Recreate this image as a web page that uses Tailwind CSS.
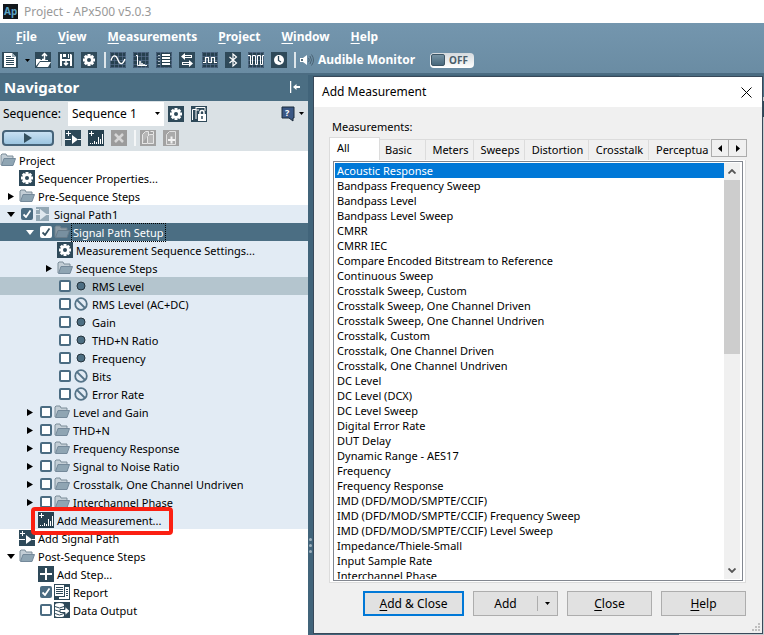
<!doctype html>
<html lang="en">
<head>
  <meta charset="UTF-8">
  <meta name="viewport" content="width=device-width, initial-scale=1.0">
  <title>Project - APx500 v5.0.3</title>
  <script src="https://cdn.jsdelivr.net/npm/@tailwindcss/browser@4"></script>
</head>
<body class="relative flex flex-col h-screen overflow-hidden bg-[#3f6177] font-['Noto_Sans','Open_Sans',sans-serif] text-[11px] text-black">

  <!-- Icon sprite -->
  <svg class="hidden">
    <symbol id="folder" viewBox="0 0 16 16">
      <path d="M1 13V3l1-1h4l1 2h6v2" fill="#c3ced6" stroke="#7c8d99"/>
      <path d="M1.5 13.5 4 6.5h11.5l-2.5 7z" fill="#8fa5b3" stroke="#74899a"/>
    </symbol>
    <symbol id="folder-dark" viewBox="0 0 16 16">
      <path d="M1 13V3l1-1h4l1 2h6v2" fill="#8b9aa4" stroke="#6f818d"/>
      <path d="M1.5 13.5 4 6.5h11.5l-2.5 7z" fill="#7890a0" stroke="#687c8a"/>
    </symbol>
    <symbol id="gear" viewBox="0 0 16 16">
      <path fill="#2e4959" d="M0 0h16v16H0z"/>
      <g stroke="#fff" stroke-width="3"><path d="M8 2v12M2 8h12M3.8 3.8l8.4 8.4M12.2 3.8l-8.4 8.4"/></g>
      <circle cx="8" cy="8" r="4.5" fill="#fff"/><circle cx="8" cy="8" r="2" fill="#2e4959"/>
    </symbol>
    <symbol id="doc" viewBox="0 0 16 16">
      <path fill="#2e4959" d="M0 0h16v16H0z"/>
      <path fill="#fff" d="M2 1h8l4 4v10H2z"/><path fill="#9fb0ba" d="M10 1v4h4z"/>
      <path stroke="#2e4959" d="M4 4.500h5M4 6.500h8M4 8.500h8M4 10.500h8M4 12.500h8"/>
    </symbol>
    <symbol id="open" viewBox="0 0 16 16">
      <path fill="#2e4959" d="M0 0h16v16H0z"/>
      <path fill="#fff" d="M1 14V7h4l1 1h7v1H5zM2 15l3-5h11l-3 5z"/>
      <path d="M7 7.500h2.500V2M7 4l2.500-2.500L12 4" fill="none" stroke="#fff" stroke-width="1.500"/>
    </symbol>
    <symbol id="save" viewBox="0 0 16 16">
      <path fill="#2e4959" d="M0 0h16v16H0z"/>
      <path fill="#fff" d="M2 2h2v5h8V2h1l1 1v11H2z"/><path fill="#fff" d="M5 2h3v3H5zM10 2h1v4h-1z"/>
      <path fill="#2e4959" d="M4 9h8v5H4z"/><path d="M8 8v5M6 11l2 2 2-2" fill="none" stroke="#fff" stroke-width="1.500"/>
    </symbol>
    <symbol id="grid" viewBox="0 0 16 16">
      <path fill="#26404f" d="M0 0h16v16H0z"/>
      <path stroke="#5b7393" d="M.5.5h15v15H.5zM0 4.500h16M0 8.500h16M0 12.500h16M4.500 0v16M8.500 0v16M12.500 0v16" fill="none" opacity=".6"/>
    </symbol>
    <symbol id="sine" viewBox="0 0 16 16">
      <use href="#grid"/><path d="M1 8.500c2-6 5-6 7-.5s5 4.500 7-1" fill="none" stroke="#fff" stroke-width="1.300"/>
    </symbol>
    <symbol id="fft" viewBox="0 0 16 16">
      <use href="#grid"/><path d="M3 3.500h1.500v10H7V9v4.500h2V11v2.500h2V12v1.500h3" fill="none" stroke="#fff"/>
    </symbol>
    <symbol id="table" viewBox="0 0 16 16">
      <use href="#grid"/><path fill="#26404f" d="M5 1h9v14H5z"/><path stroke="#fff" stroke-width="2" d="M6 3h8M6 6h8M6 9h8M6 12h8"/><path stroke="#aebcc6" d="M2 3.500h2M2 6.500h2M2 9.500h2M2 12.500h2"/>
    </symbol>
    <symbol id="swap" viewBox="0 0 16 16">
      <path fill="#2e4959" d="M0 0h16v16H0z"/>
      <path d="M2 4.500 6 1v2h7v3H6v2zM14 11.500 10 8v2H3v3h7v2z" fill="#fff"/><path stroke="#2e4959" d="M6 4.500h6M4 11.500h6"/>
    </symbol>
    <symbol id="square" viewBox="0 0 16 16">
      <use href="#grid"/><path d="M1 10.500h2.500v-5h3v5h3v-5h3v5H15" fill="none" stroke="#fff" stroke-width="1.200"/>
    </symbol>
    <symbol id="bluetooth" viewBox="0 0 16 16">
      <path fill="#2e4959" d="M0 0h16v16H0z"/><path d="m4.500 5 7 6L8 14V2l3.500 3-7 6" fill="none" stroke="#fff" stroke-width="1.200"/>
    </symbol>
    <symbol id="pulse" viewBox="0 0 16 16">
      <use href="#grid"/><path d="M0 3.500h2.500v9h2v-9h3v9h2v-9h3v9h2v-9H16" fill="none" stroke="#fff"/>
    </symbol>
    <symbol id="clock" viewBox="0 0 16 16">
      <path fill="#2e4959" d="M0 0h16v16H0z"/><circle cx="8" cy="8" r="5" fill="#fff"/><path d="M7.500 4v4.500L10 10" fill="none" stroke="#2e4959" stroke-width="1.300"/>
    </symbol>
    <symbol id="sequence-lock" viewBox="0 0 16 16">
      <path fill="#2e4959" d="M0 0h16v16H0z"/><path d="M1.500 14V3.500H5M5 1.500h9V5M5 1v3M8 4H5v9" fill="none" stroke="#fff"/>
      <path fill="#fff" d="M7 8h8v7H7z"/><path d="M9 8V6.500a2 2 0 0 1 4 0V8" fill="none" stroke="#fff" stroke-width="1.500"/><path stroke="#2e4959" stroke-width="1.500" d="M11 10v3"/>
    </symbol>
    <symbol id="add-path" viewBox="0 0 16 16">
      <path fill="#2e4959" d="M0 0h16v16H0z"/><path stroke="#fff" d="M1 3.500h5M3.500 1v5M0 9.500h6M13 9.500h3"/><path fill="#fff" d="M7 5v9l6-4.500z"/>
    </symbol>
    <symbol id="add-measurement" viewBox="0 0 16 16">
      <path fill="#26404f" d="M0 0h16v16H0z"/><path stroke="#fff" d="M1 3.500h5M3.500 1v5M2 13.500h1M4 13.500h1M6.500 11v3M8.500 12v2M10.500 7v7M12.500 9v5M14.500 4v10"/>
    </symbol>
    <symbol id="add" viewBox="0 0 16 16">
      <path fill="#2e4959" d="M0 0h16v16H0z"/><path stroke="#fff" stroke-width="2" d="M2 8h12M8 2v12"/>
    </symbol>
    <symbol id="delete" viewBox="0 0 16 16">
      <path fill="#9b9b9b" d="M0 0h16v16H0z"/><path stroke="#d5d5d5" stroke-width="2.500" d="m4 4 8 8M12 4l-8 8"/>
    </symbol>
    <symbol id="copy" viewBox="0 0 16 16">
      <path fill="#a2a2a2" d="M0 0h16v16H0z"/><path d="M2.500 13V4.500l3-3h3V5M7.500 13.500v-7l2-2h4v9z" fill="#b6b6b6" stroke="#e6e6e6"/><path d="M2 13.500h5M10.500 1.500h3V4" fill="none" stroke="#e6e6e6"/>
    </symbol>
    <symbol id="add-page" viewBox="0 0 16 16">
      <path fill="#a2a2a2" d="M0 0h16v16H0z"/><path d="M3.500 14.500v-10l3-3h6v13z" fill="#aaa" stroke="#e0e0e0"/><path stroke="#f2f2f2" stroke-width="2" d="M5 10h7M8.500 6.500v7"/>
    </symbol>
    <symbol id="path" viewBox="0 0 16 16">
      <path fill="#93a8b5" d="M1 1h13v14H1z"/><path stroke="#dfe8ee" d="M1 8.500h4M10 8.500h5M1 3.500h3"/><path d="M5 3v11l7-5.500z" fill="#dfe8ee"/>
    </symbol>
    <symbol id="dot" viewBox="0 0 16 16"><circle cx="8" cy="8" r="4" fill="#4d6e82" stroke="#25333c"/></symbol>
    <symbol id="none" viewBox="0 0 16 16">
      <circle cx="8" cy="8" r="5.800" fill="none" stroke="#557488" stroke-width="1.800"/><path stroke="#557488" stroke-width="1.800" d="m4 4 8 8"/>
    </symbol>
    <symbol id="report" viewBox="0 0 16 16">
      <path fill="#2e4959" d="M0 0h16v16H0z"/><path fill="#fff" d="M1 1h9v11H1zM11 3h4v12H5v-2h6z"/>
      <path stroke="#2e4959" d="M2 3.500h7M2 5.500h7M2 7.500h7M2 9.500h7M12 5.500h2M12 7.500h2M12 9.500h2M12 11.500h2"/>
    </symbol>
    <symbol id="output" viewBox="0 0 16 16">
      <path fill="#2e4959" d="M0 0h16v16H0z"/><path d="M1 3h9v11H1z" fill="#fff"/><ellipse cx="5.500" cy="3" rx="4.500" ry="2" fill="#fff"/><ellipse cx="5.500" cy="13.500" rx="4.500" ry="1.500" fill="#fff"/>
      <path d="M1 4.500q4.500 3 9 0M1 8q4.500 3 9 0M1 11.500q4.500 3 9 0" fill="none" stroke="#2e4959"/><path fill="#fff" stroke="#2e4959" d="M6 7.500h5v-3l5 4.500-5 4.500v-3H6z"/>
    </symbol>
  </svg>

  <!-- Title bar -->
  <header class="flex items-center gap-1.5 h-[23px] px-[3px] shrink-0 bg-white text-xs text-[#999]">
    <svg class="size-[15px]" viewBox="0 0 15 15" aria-hidden="true"><path fill="#12171b" d="M0 0h15v15H0z"/><text x="1" y="11" font-size="10" font-weight="700" fill="#5ba3c4">Ap</text></svg>
    <h1>Project - APx500 v5.0.3</h1>
  </header>

  <!-- Menu and toolbar -->
  <div class="flex flex-col h-[50px] shrink-0 bg-linear-to-b from-[#7496ae] to-[#6a8ca3]">
    <nav class="flex items-center gap-[21px] h-[26px] px-4 pt-0.5 text-xs font-bold text-white">
      <a href="#"><u class="underline-offset-2">F</u>ile</a>
      <a href="#"><u class="underline-offset-2">V</u>iew</a>
      <a href="#"><u class="underline-offset-2">M</u>easurements</a>
      <a href="#"><u class="underline-offset-2">P</u>roject</a>
      <a href="#"><u class="underline-offset-2">W</u>indow</a>
      <a href="#"><u class="underline-offset-2">H</u>elp</a>
    </nav>
    <div class="flex items-center gap-[7px] h-[22px] px-0.5">
      <button aria-label="New"><svg class="size-4"><use href="#doc"/></svg></button>
      <button aria-label="New options" class="w-[3px]"><svg class="w-[5px] h-[3px]" viewBox="0 0 5 3"><path d="M0 0h5L2.500 3z"/></svg></button>
      <button aria-label="Open"><svg class="size-4"><use href="#open"/></svg></button>
      <button aria-label="Save"><svg class="size-4"><use href="#save"/></svg></button>
      <button aria-label="Settings"><svg class="size-4"><use href="#gear"/></svg></button>
      <span class="w-0.5 h-4 -mr-[3px] bg-[#dde5ea]"></span>
      <button aria-label="Scope"><svg class="size-4"><use href="#sine"/></svg></button>
      <button aria-label="FFT"><svg class="size-4"><use href="#fft"/></svg></button>
      <button aria-label="Meters"><svg class="size-4"><use href="#table"/></svg></button>
      <button aria-label="Switchers"><svg class="size-4"><use href="#swap"/></svg></button>
      <button aria-label="Digital"><svg class="size-4"><use href="#square"/></svg></button>
      <button aria-label="Bluetooth"><svg class="size-4"><use href="#bluetooth"/></svg></button>
      <button aria-label="Pulse"><svg class="size-4"><use href="#pulse"/></svg></button>
      <button aria-label="Clock"><svg class="size-4"><use href="#clock"/></svg></button>
      <span class="w-0.5 h-4 -mr-[3px] bg-[#dde5ea]"></span>
      <span class="flex items-center gap-1 text-xs font-bold text-white">
        <svg class="w-3.5 h-4" viewBox="0 0 14 16" fill="none"><path fill="#fff" d="M0 6h3l4-3v10l-4-3H0z"/><path fill="#536b7a" d="M1 7h2v2H1z"/><path stroke="#4b6374" d="M8.500 6q1.500 2 0 4M10 4q3 4 0 8M11.500 2.500q4 5.500 0 11"/></svg>
        Audible Monitor
      </span>
      <button class="flex items-center gap-1 w-11 h-[15px] ml-2 p-px rounded-sm bg-linear-to-b from-[#d5dade] to-white text-[10px] font-bold text-[#4a5e6b]"><span class="w-3.5 h-3 rounded-xs border border-[#3d5565] bg-linear-to-b from-[#7592a3] to-[#48687c]"></span>OFF</button>
    </div>
  </div>

  <main class="flex flex-1 min-h-0 border-t-2 border-[#4b6c82] bg-[#41647a]">
    <section class="flex flex-col w-[308px] shrink-0 bg-white">
      <div class="flex items-center justify-between h-[26px] shrink-0 pl-1 pr-2 pb-0.5 bg-[#4b6e83] text-white">
        <h2 class="text-[15px] font-bold">Navigator</h2>
        <button aria-label="Collapse"><svg class="w-2.5 h-3" viewBox="0 0 10 12" fill="none" stroke="#fff"><path d="M.5 0v12" stroke-width="1.500"/><path d="M10 6H4" stroke-width="2"/><path d="M3 6l3.500-3v6z" fill="#fff" stroke="none"/></svg></button>
      </div>

      <div class="flex flex-col h-[50px] shrink-0 bg-[#dae1e5]">
        <div class="flex items-center h-[25px] pl-[3px] pr-1">
          <label for="sequence" class="w-[65px] text-xs">Sequence:</label>
          <span class="relative mr-1">
            <select id="sequence" class="appearance-none w-24 h-6 pl-1 bg-white text-xs"><option>Sequence 1</option></select>
            <svg class="absolute right-1 top-2.5 w-[5px] h-[3px] pointer-events-none" viewBox="0 0 5 3"><path d="M0 0h5L2.500 3z"/></svg>
          </span>
          <button aria-label="Sequence settings" class="mr-[7px]"><svg class="size-4"><use href="#gear"/></svg></button>
          <button aria-label="Lock sequence"><svg class="size-4"><use href="#sequence-lock"/></svg></button>
          <button aria-label="Help" class="flex items-center gap-1 ml-auto">
            <svg class="w-3.5 h-4" viewBox="0 0 14 16"><path d="M1 1h12v11h-1v3l-4-3H1z" fill="#3b5885" stroke="#1d2c3c"/><text x="4" y="10" font-size="9" font-weight="700" fill="#fff">?</text></svg>
            <svg class="w-[5px] h-[3px]" viewBox="0 0 5 3"><path d="M0 0h5L2.500 3z"/></svg>
          </button>
        </div>
        <div class="flex items-center gap-[7px] h-6 pl-0.5">
          <button aria-label="Run" class="grid place-items-center w-[52px] h-4 rounded border-2 border-[#46647a] bg-linear-to-b from-[#c8e0f2] to-[#9cc5e0]"><svg class="w-2 h-2.5" viewBox="0 0 8 10"><path d="M0 0v10l8-5z" fill="#34505f"/></svg></button>
          <span class="w-px h-4 -mr-1 bg-[#b4bcc1]"></span>
          <button aria-label="Add signal path"><svg class="size-4"><use href="#add-path"/></svg></button>
          <button aria-label="Add measurement"><svg class="size-4"><use href="#add-measurement"/></svg></button>
          <button aria-label="Delete"><svg class="size-4"><use href="#delete"/></svg></button>
          <span class="w-0.5 h-4 -mr-[3px] bg-[#f4f6f7]"></span>
          <button aria-label="Copy"><svg class="size-4"><use href="#copy"/></svg></button>
          <button aria-label="Add page"><svg class="size-4"><use href="#add-page"/></svg></button>
        </div>
      </div>

      <div class="relative">
        <ul id="tree" role="tree"></ul>
        <!-- Callout around the Add Measurement row -->
        <div class="absolute left-[31px] top-[356px] w-[142px] h-7 rounded-sm border-4 border-[#fb2012]"></div>
      </div>
    </section>

    <!-- Splitter grip -->
    <div class="flex flex-col items-center justify-center gap-[3px] w-[5px] pt-[381px]">
      <span class="size-[3px] rounded-full bg-[#9fb1bd]"></span>
      <span class="size-[3px] rounded-full bg-[#9fb1bd]"></span>
      <span class="size-[3px] rounded-full bg-[#9fb1bd]"></span>
    </div>
    <!-- Side panel behind the dialog -->
    <aside class="w-[85px] ml-auto bg-[#c8cccf]">
      <div class="h-[22px] bg-[#4b6e83]"></div>
      <div class="h-4 mt-1 bg-[#2e4959]"></div>
    </aside>
  </main>

  <!-- Dialog -->
  <div role="dialog" aria-labelledby="dialog-title" class="absolute left-[313px] right-px top-[76px] bottom-px flex flex-col border border-[#38495a] bg-[#f0f0f0]">
    <div class="flex items-center justify-between h-[30px] shrink-0 pl-2 pr-2.5 bg-white text-xs">
      <h2 id="dialog-title">Add Measurement</h2>
      <button aria-label="Close dialog"><svg class="size-[11px]" viewBox="0 0 11 11" stroke="#000"><path d="m.5.5 10 10M10.500.5l-10 10"/></svg></button>
    </div>

    <div class="flex flex-col flex-1 min-h-0 pl-[15px] pr-4 pt-3">
      <p class="h-[18px] shrink-0 pl-[3px]" id="list-label">Measurements:</p>
      <div class="relative flex items-end h-[23px] shrink-0" role="tablist">
        <button role="tab" aria-selected="true" class="w-[51px] h-[23px] pl-[7px] pb-0.5 text-left bg-white border border-b-0 border-[#dcdcdc]">All</button>
        <button role="tab" class="w-[46px] h-[21px] pl-[5px] text-left border-t border-r border-[#dcdcdc]">Basic</button>
        <button role="tab" class="w-12 h-[21px] pl-0.5 border-t border-r border-[#dcdcdc]">Meters</button>
        <button role="tab" class="w-[51px] h-[21px] pl-0.5 border-t border-r border-[#dcdcdc]">Sweeps</button>
        <button role="tab" class="w-16 h-[21px] pl-0.5 border-t border-r border-[#dcdcdc]">Distortion</button>
        <button role="tab" class="w-[60px] h-[21px] pl-0.5 border-t border-r border-[#dcdcdc]">Crosstalk</button>
        <button role="tab" class="flex-1 h-[21px] pl-[7px] mr-9 overflow-hidden text-left whitespace-nowrap border-t border-[#dcdcdc]">Perceptua</button>
        <div class="absolute -right-px top-0.5 flex h-[18px]">
          <button aria-label="Scroll tabs left" class="grid place-items-center w-[18px] border border-[#acacac] bg-[#f0f0f0]"><svg class="w-1 h-[7px]" viewBox="0 0 4 7"><path d="M4 0v7L0 3.500z"/></svg></button>
          <button aria-label="Scroll tabs right" class="grid place-items-center w-[19px] -ml-px border border-[#acacac] bg-[#f0f0f0]"><svg class="w-1 h-[7px]" viewBox="0 0 4 7"><path d="M0 0v7l4-3.500z"/></svg></button>
        </div>
      </div>

      <div class="flex-1 min-h-0 p-[3px] pt-px pb-px pr-0.5 bg-white border border-t-0 border-[#dcdcdc]">
        <div class="flex h-full border border-[#828790] bg-white p-px">
          <ul id="measurements" role="listbox" aria-labelledby="list-label" class="flex-1 overflow-hidden"></ul>
          <div class="flex flex-col items-center justify-between w-4 mr-px py-1.5 bg-[#f0f0f0]">
            <svg class="w-2 h-[5px] shrink-0" viewBox="0 0 8 5" fill="none" stroke="#555" stroke-width="1.800"><path d="M.5 4.500 4 1l3.500 3.500"/></svg>
            <span class="w-4 h-[43%] mb-auto mt-1.5 bg-[#cdcdcd]"></span>
            <svg class="w-2 h-[5px] shrink-0" viewBox="0 0 8 5" fill="none" stroke="#555" stroke-width="1.800"><path d="M.5.5 4 4 7.500.5"/></svg>
          </div>
        </div>
      </div>
    </div>

    <div class="relative flex justify-end gap-[9px] h-[50px] shrink-0 pt-2 pr-4">
      <button class="w-[101px] h-[25px] border-2 border-[#0078d7] bg-[#e1e1e1] text-xs"><u class="underline-offset-2">A</u>dd &amp; Close</button>
      <div class="flex w-[85px] h-[25px] border border-[#adadad] bg-[#e1e1e1] text-xs">
        <button class="flex-1">Add</button>
        <button aria-label="Add options" class="grid place-items-center w-5 my-1 border-l border-[#adadad]"><svg class="w-[5px] h-[3px]" viewBox="0 0 5 3"><path d="M0 0h5L2.500 3z"/></svg></button>
      </div>
      <button class="w-[85px] h-[25px] border border-[#adadad] bg-[#e1e1e1] text-xs"><u class="underline-offset-2">C</u>lose</button>
      <button class="w-[85px] h-[25px] border border-[#adadad] bg-[#e1e1e1] text-xs"><u class="underline-offset-2">H</u>elp</button>
      <svg class="absolute right-0.5 bottom-0.5 size-2" viewBox="0 0 8 8" fill="#bfbfbf"><path d="M6 0h2v2H6zM3 3h2v2H3zM6 3h2v2H6zM0 6h2v2H0zM3 6h2v2H3zM6 6h2v2H6z"/></svg>
    </div>
  </div>

  <script>
    // level, arrow (o = open, c = closed), checkbox (1 = ticked, 0 = empty, null = none), icon, text, row state
    const rows = [
      [0, '', null, 'folder', 'Project', ''],
      [1, '', null, 'gear', 'Sequencer Properties...', ''],
      [1, 'c', null, 'folder', 'Pre-Sequence Steps', ''],
      [1, 'o', 1, 'path', 'Signal Path1', 'path'],
      [2, 'o', 1, 'folder-dark', 'Signal Path Setup', 'selected'],
      [3, '', null, 'gear', 'Measurement Sequence Settings...', 'path'],
      [3, 'c', null, 'folder', 'Sequence Steps', 'path'],
      [3, '', 0, 'dot', 'RMS Level', 'active'],
      [3, '', 0, 'none', 'RMS Level (AC+DC)', 'path'],
      [3, '', 0, 'dot', 'Gain', 'path'],
      [3, '', 0, 'dot', 'THD+N Ratio', 'path'],
      [3, '', 0, 'dot', 'Frequency', 'path'],
      [3, '', 0, 'none', 'Bits', 'path'],
      [3, '', 0, 'none', 'Error Rate', 'path'],
      [2, 'c', 0, 'folder', 'Level and Gain', 'path'],
      [2, 'c', 0, 'folder', 'THD+N', 'path'],
      [2, 'c', 0, 'folder', 'Frequency Response', 'path'],
      [2, 'c', 0, 'folder', 'Signal to Noise Ratio', 'path'],
      [2, 'c', 0, 'folder', 'Crosstalk, One Channel Undriven', 'path'],
      [2, 'c', 0, 'folder', 'Interchannel Phase', 'path'],
      [2, '', null, 'add-measurement', 'Add Measurement...', 'path'],
      [1, '', null, 'add-path', 'Add Signal Path', ''],
      [1, 'o', null, 'folder', 'Post-Sequence Steps', ''],
      [2, '', null, 'add', 'Add Step...', ''],
      [2, '', 1, 'report', 'Report', ''],
      [2, '', 0, 'output', 'Data Output', '']
    ];
    const rowClass = { '': '', path: 'bg-[#e2ebf4]', active: 'bg-[#b4c5ce]', selected: 'bg-[#4b6e83] text-white' };
    const arrows = {
      '': '',
      o: '<svg class="w-2 h-[5px]" viewBox="0 0 8 5" fill="currentColor"><path d="M0 0h8L4 5z"/></svg>',
      c: '<svg class="w-1.5 h-[7px]" viewBox="0 0 6 7" fill="currentColor"><path d="M0 0v7l6-3.500z"/></svg>'
    };

    document.getElementById('tree').innerHTML = rows.map(([level, arrow, check, icon, text, state], i) => {
      const onDark = state === 'selected';
      const box = check === null ? '' : `
        <span class="relative w-4 pl-0.5">
          <input id="row${i}" type="checkbox" ${check ? 'checked' : ''} class="peer block appearance-none size-3 rounded-xs border-2 ${onDark ? 'border-white bg-white' : 'border-[#4b6c82] bg-white checked:bg-[#4b6c82]'}">
          <svg class="absolute left-1 top-0.5 size-2 hidden peer-checked:block pointer-events-none" viewBox="0 0 8 8" fill="none" stroke="${onDark ? '#34505f' : '#fff'}" stroke-width="1.800"><path d="M.5 4.500 3 7l4.500-6.500"/></svg>
        </span>`;
      const tag = check === null ? 'span' : 'label';
      return `<li role="treeitem" class="flex items-center h-[18px] whitespace-nowrap ${rowClass[state]}" style="padding-left:${Math.max(level - 1, 0) * 19}px">
        ${level ? `<span class="flex justify-center w-[19px] pl-0.5">${arrows[arrow]}</span>` : ''}${box}
        <svg class="size-4 shrink-0"><use href="#${icon}"/></svg>
        <${tag} ${check === null ? '' : `for="row${i}"`} class="ml-0.5 px-px pt-px leading-4 ${onDark ? 'outline-1 outline-dotted outline-black' : ''}">${text}</${tag}>
      </li>`;
    }).join('');

    const measurements = [
      'Acoustic Response', 'Bandpass Frequency Sweep', 'Bandpass Level', 'Bandpass Level Sweep', 'CMRR', 'CMRR IEC',
      'Compare Encoded Bitstream to Reference', 'Continuous Sweep', 'Crosstalk Sweep, Custom',
      'Crosstalk Sweep, One Channel Driven', 'Crosstalk Sweep, One Channel Undriven', 'Crosstalk, Custom',
      'Crosstalk, One Channel Driven', 'Crosstalk, One Channel Undriven', 'DC Level', 'DC Level (DCX)',
      'DC Level Sweep', 'Digital Error Rate', 'DUT Delay', 'Dynamic Range - AES17', 'Frequency',
      'Frequency Response', 'IMD (DFD/MOD/SMPTE/CCIF)', 'IMD (DFD/MOD/SMPTE/CCIF) Frequency Sweep',
      'IMD (DFD/MOD/SMPTE/CCIF) Level Sweep', 'Impedance/Thiele-Small', 'Input Sample Rate', 'Interchannel Phase'
    ];
    document.getElementById('measurements').innerHTML = measurements.map((name, i) =>
      `<li role="option" aria-selected="${i === 0}" class="h-[15px] pl-0.5 leading-[15px] ${i === 0 ? 'bg-[#0078d7] text-white' : ''}">${name}</li>`
    ).join('');
  </script>
</body>
</html>
